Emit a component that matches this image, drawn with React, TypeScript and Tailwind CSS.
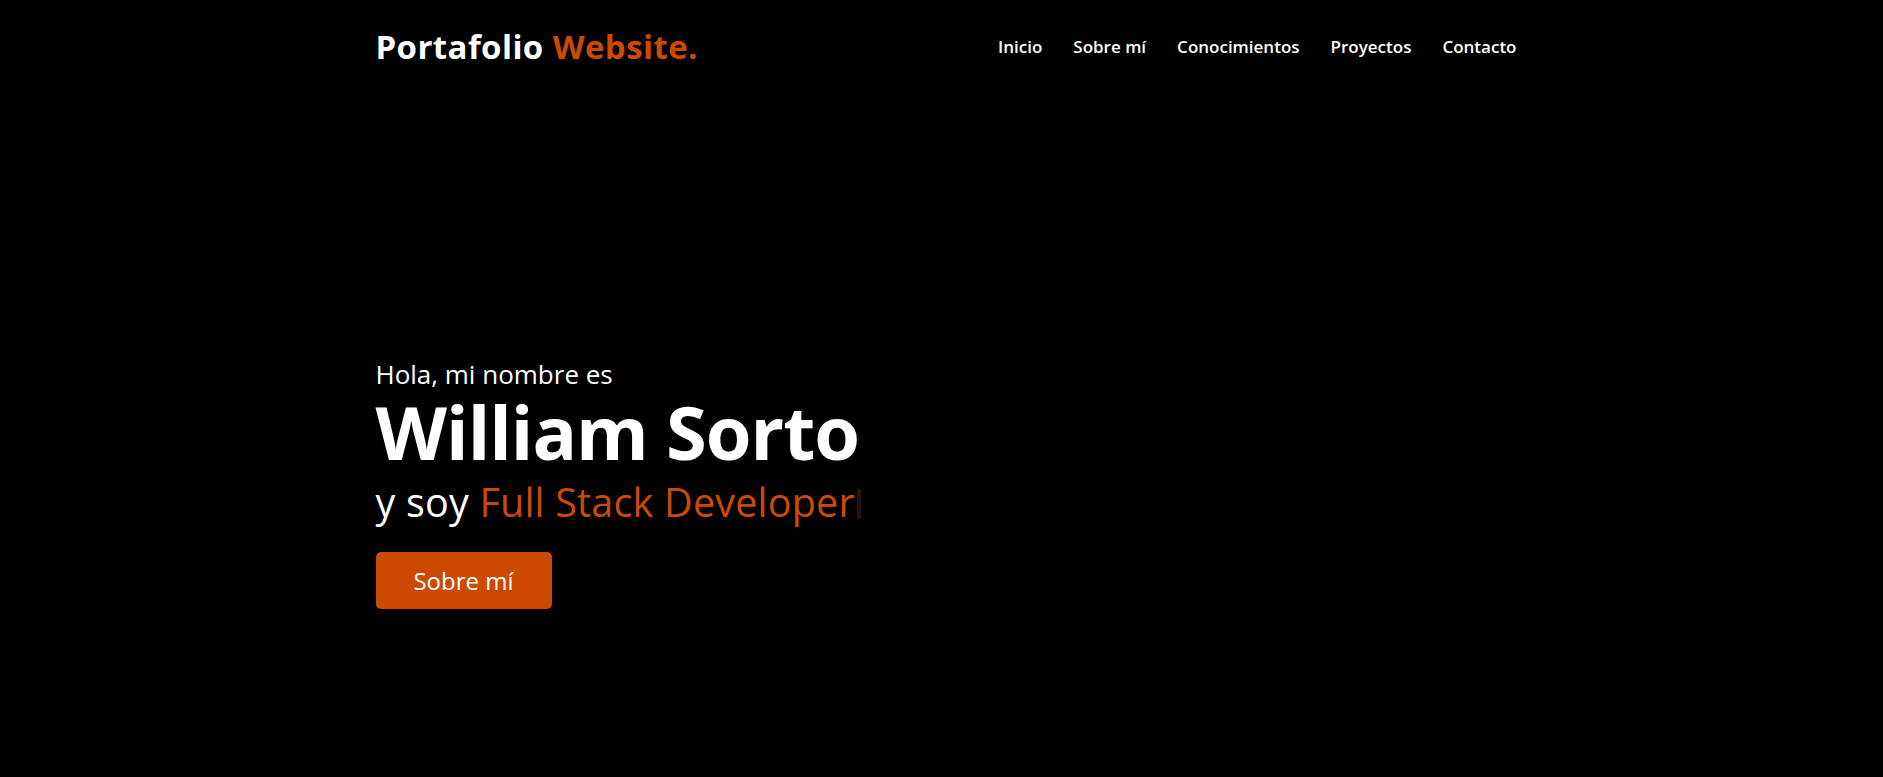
import React from "react";

const navLinks = ["Inicio", "Sobre mí", "Conocimientos", "Proyectos", "Contacto"];

const App: React.FC = () => {
  return (
    <div className="min-h-screen bg-black text-white font-['Open_Sans',sans-serif]">
      <header className="w-[1156px] mx-auto pl-3 pr-[3px] h-[94px] flex items-center justify-between">
        <a href="#" className="text-[33px] font-bold tracking-[0.4px]">
          Portafolio <span className="text-[#cc4a00]">Website.</span>
        </a>
        <nav className="flex items-center gap-[31px]">
          {navLinks.map(link => (
            <a key={link} href="#" className="text-[17px] font-semibold">
              {link}
            </a>
          ))}
        </nav>
      </header>

      <section className="w-[1156px] mx-auto pl-3 pt-[264px] pb-[160px]">
        <p className="text-[26px] leading-[32px]">Hola, mi nombre es</p>
        <h1 className="text-[74px] font-bold leading-[84px] tracking-[-1px]">William Sorto</h1>
        <p className="text-[39.5px] leading-[56px] tracking-[0.2px] flex items-center">
          y soy&nbsp;<span className="text-[#cc4a00]">Full Stack Developer</span>
          <span className="inline-block w-[4px] h-[30px] ml-[2px] mt-[4px] bg-[#2a1208]" />
        </p>
        <button className="mt-[22px] w-[176px] h-[57px] rounded-[5px] bg-[#cc4a00] text-[24px]">
          Sobre mí
        </button>
      </section>
    </div>
  );
};

export default App;
